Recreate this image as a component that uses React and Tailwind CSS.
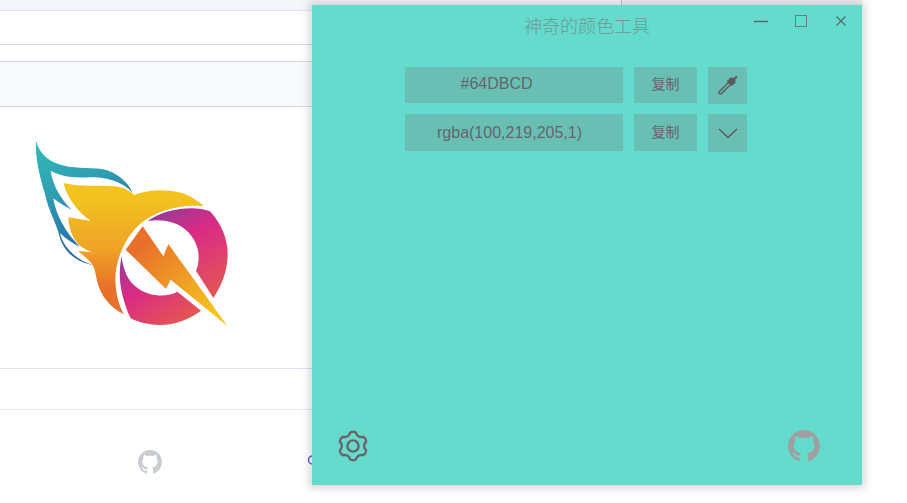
import React from "react";
import { BsGithub } from "react-icons/bs";

const Logo = () => (
  <svg width="260" height="220" viewBox="0 0 780 660" className="block">
    <defs>
      <linearGradient id="wing" x1="0" y1="0" x2="0.35" y2="1">
        <stop offset="0" stopColor="#2fbcb8" />
        <stop offset="0.45" stopColor="#2f9db2" />
        <stop offset="1" stopColor="#2a62a3" />
      </linearGradient>
      <linearGradient id="flame" x1="0" y1="0" x2="0" y2="1">
        <stop offset="0.1" stopColor="#f3c320" />
        <stop offset="0.5" stopColor="#efa326" />
        <stop offset="0.8" stopColor="#e8702b" />
      </linearGradient>
      <linearGradient id="q1" x1="0.1" y1="0" x2="0.6" y2="1">
        <stop offset="0" stopColor="#8f3d98" />
        <stop offset="0.4" stopColor="#d92a85" />
        <stop offset="1" stopColor="#e3525a" />
      </linearGradient>
      <linearGradient id="q2" x1="0" y1="0" x2="0.8" y2="1">
        <stop offset="0" stopColor="#8f3d98" />
        <stop offset="0.4" stopColor="#d92a85" />
        <stop offset="1" stopColor="#e5584f" />
      </linearGradient>
      <linearGradient id="bolt" x1="0.1" y1="0.1" x2="0.9" y2="0.95">
        <stop offset="0.1" stopColor="#e9702b" />
        <stop offset="0.95" stopColor="#f4c71e" />
      </linearGradient>
    </defs>
    <path
      fill="url(#wing)"
      d="M108 66C118 100 138 122 175 135C215 150 265 145 305 150C350 158 385 190 398 222C375 195 335 178 285 175C240 175 190 178 152 155C156 190 180 240 215 272C195 262 175 250 160 238C165 270 185 330 240 383C220 375 195 358 180 342C190 385 230 425 278 437C235 432 190 400 178 350C172 320 145 275 135 225C125 190 105 130 108 66Z"
    />
    <path
      fill="url(#flame)"
      d="M190 192C240 205 300 198 345 202C370 205 390 215 402 228C440 213 500 208 545 222C575 232 598 248 612 262C540 255 470 275 420 315C375 355 340 430 347 500C350 535 358 560 372 586C330 565 300 530 290 480C285 455 285 445 270 428C258 415 245 405 235 396L277 400C250 390 232 378 220 355C210 335 205 315 205 295L273 306C240 285 205 245 190 192Z"
    />
    <path
      fill="url(#q1)"
      d="M443 306C480 280 530 268 575 268C595 268 615 272 630 277C665 315 683 360 683 405C683 455 665 500 640 537L588 455C595 440 597 420 595 400C590 365 565 330 530 315C505 305 475 300 443 306Z"
    />
    <path
      fill="url(#q2)"
      d="M366 410C355 450 358 500 372 545C378 565 385 585 392 598C420 612 450 618 480 618C525 618 570 600 603 575L532 518C510 530 480 533 450 525C415 515 385 490 375 455C370 440 365 425 366 410Z"
    />
    <path fill="url(#bolt)" d="M428 322L377 392L498 510L512 482L683 622L505 375L490 412Z" />
  </svg>
);

const gearPath = (() => {
  const pts = [];
  for (let i = 0; i < 180; i++) {
    const a = (i / 180) * Math.PI * 2;
    const c = Math.cos(6 * a);
    const shaped = c > 0 ? Math.pow(c, 0.45) : -Math.pow(-c, 0.8);
    const r = 12.7 + 1.5 * shaped;
    pts.push((16 + r * Math.sin(a)).toFixed(2) + " " + (16 - r * Math.cos(a)).toFixed(2));
  }
  return "M" + pts.join("L") + "Z";
})();

const GrayBox = ({ className, children }) => (
  <div className={"flex items-center justify-center bg-[#6abfb5] " + className}>{children}</div>
);

export default function App() {
  return (
    <div className="relative flex h-[503px] w-[907px] overflow-hidden bg-white font-['Liberation_Sans',sans-serif]">
      <div className="w-[621px] shrink-0">
        <div className="h-[11px] border-b border-[#e0e6ee] bg-[#f4f6fa]" />
        <div className="h-[34px] border-b border-[#d5d8de]" />
        <div className="h-[17px] border-b border-[#d5d8de]" />
        <div className="h-[45px] border-b border-[#d5d8de] bg-[#f8f9fc]" />
        <div className="h-[262px] border-b border-[#d9e4ee] pt-[12px]">
          <Logo />
        </div>
        <div className="h-[41px] border-b border-[#ece8f0]" />
        <div className="flex items-center pl-[138px] pt-[40px]">
          <BsGithub className="h-6 w-6 text-[#c8ccd3]" />
          <svg width="10" height="12" viewBox="0 0 10 12" className="ml-[146px] mt-[-4px]">
            <circle cx="4.5" cy="6" r="4" fill="none" stroke="#3d3dd6" strokeWidth="1.3" />
          </svg>
        </div>
      </div>
      <div className="h-[5px] w-[241px] border-l border-[#b9bdc6] bg-[#efeff2]" />

      {/* floating window */}
      <div className="absolute left-[312px] top-[5px] flex h-[480px] w-[550px] flex-col bg-[#65dbcd] text-[#65666a] shadow-[0_0_8px_3px_rgba(120,120,135,0.3)]">
        <div className="relative flex h-[62px] justify-center">
          <span className="pt-[8px] font-['Noto_Sans_CJK_SC',sans-serif] text-[18px] font-light leading-[24px] text-[#6f9a96]">
            神奇的颜色工具
          </span>
          <div className="absolute right-[16px] top-[9px] flex items-center">
            <svg width="14" height="12" viewBox="0 0 14 12" className="mt-[1px]">
              <path d="M0 6.5H14" stroke="#5f6368" strokeWidth="1.4" />
            </svg>
            <svg width="12" height="12" viewBox="0 0 12 12" className="ml-[27px]">
              <rect x="0.5" y="0.5" width="11" height="11" fill="none" stroke="#5f7f80" strokeWidth="1" />
            </svg>
            <svg width="10" height="10" viewBox="0 0 10 10" className="ml-[29px]">
              <path d="M0.5 0.5L9.5 9.5M9.5 0.5L0.5 9.5" stroke="#566468" strokeWidth="1.1" />
            </svg>
          </div>
        </div>
        <div className="flex flex-col gap-[10px] pl-[93px] text-[16px]">
          <div className="flex gap-[11px]">
            <GrayBox className="h-[36px] w-[218px] pb-[2px] pr-[35px]">#64DBCD</GrayBox>
            <GrayBox className="h-[36px] w-[63px] pb-[3px] font-['Noto_Sans_CJK_SC',sans-serif] text-[14px]">复制</GrayBox>
            <GrayBox className="h-[37px] w-[39px]">
              <svg width="22" height="20" viewBox="0 0 22 20">
                <path d="M12 8L3.5 16.5" fill="none" stroke="#5a5a5e" strokeWidth="4.4" strokeLinecap="round" />
                <path d="M12 8L3.5 16.5" fill="none" stroke="#6abfb5" strokeWidth="1.6" strokeLinecap="round" />
                <circle cx="15" cy="5" r="3.6" fill="#5a5a5e" />
                <path d="M10.5 4.5L15.5 9.5" stroke="#5a5a5e" strokeWidth="2.2" />
                <path d="M16 4L20 0.5" stroke="#5a5a5e" strokeWidth="2.2" />
              </svg>
            </GrayBox>
          </div>
          <div className="flex gap-[11px]">
            <GrayBox className="h-[37px] w-[218px] pr-[9px]">rgba(100,219,205,1)</GrayBox>
            <GrayBox className="h-[37px] w-[63px] pb-[3px] font-['Noto_Sans_CJK_SC',sans-serif] text-[14px]">复制</GrayBox>
            <GrayBox className="h-[38px] w-[39px]">
              <svg width="20" height="11" viewBox="0 0 20 11">
                <path d="M1 1L10 9.5L19 1" fill="none" stroke="#5a5a5e" strokeWidth="1.5" />
              </svg>
            </GrayBox>
          </div>
        </div>
        <div className="mt-auto flex items-center justify-between pb-[23px] pl-[25px] pr-[42px]">
          <svg width="32" height="32" viewBox="0 0 32 32">
            <path d={gearPath} fill="none" stroke="#6b6468" strokeWidth="2.4" strokeLinejoin="round" />
            <circle cx="16" cy="16" r="5.6" fill="none" stroke="#6b6468" strokeWidth="2.4" />
          </svg>
          <BsGithub className="h-8 w-8 text-[#a0a0a2]" />
        </div>
      </div>
    </div>
  );
}
